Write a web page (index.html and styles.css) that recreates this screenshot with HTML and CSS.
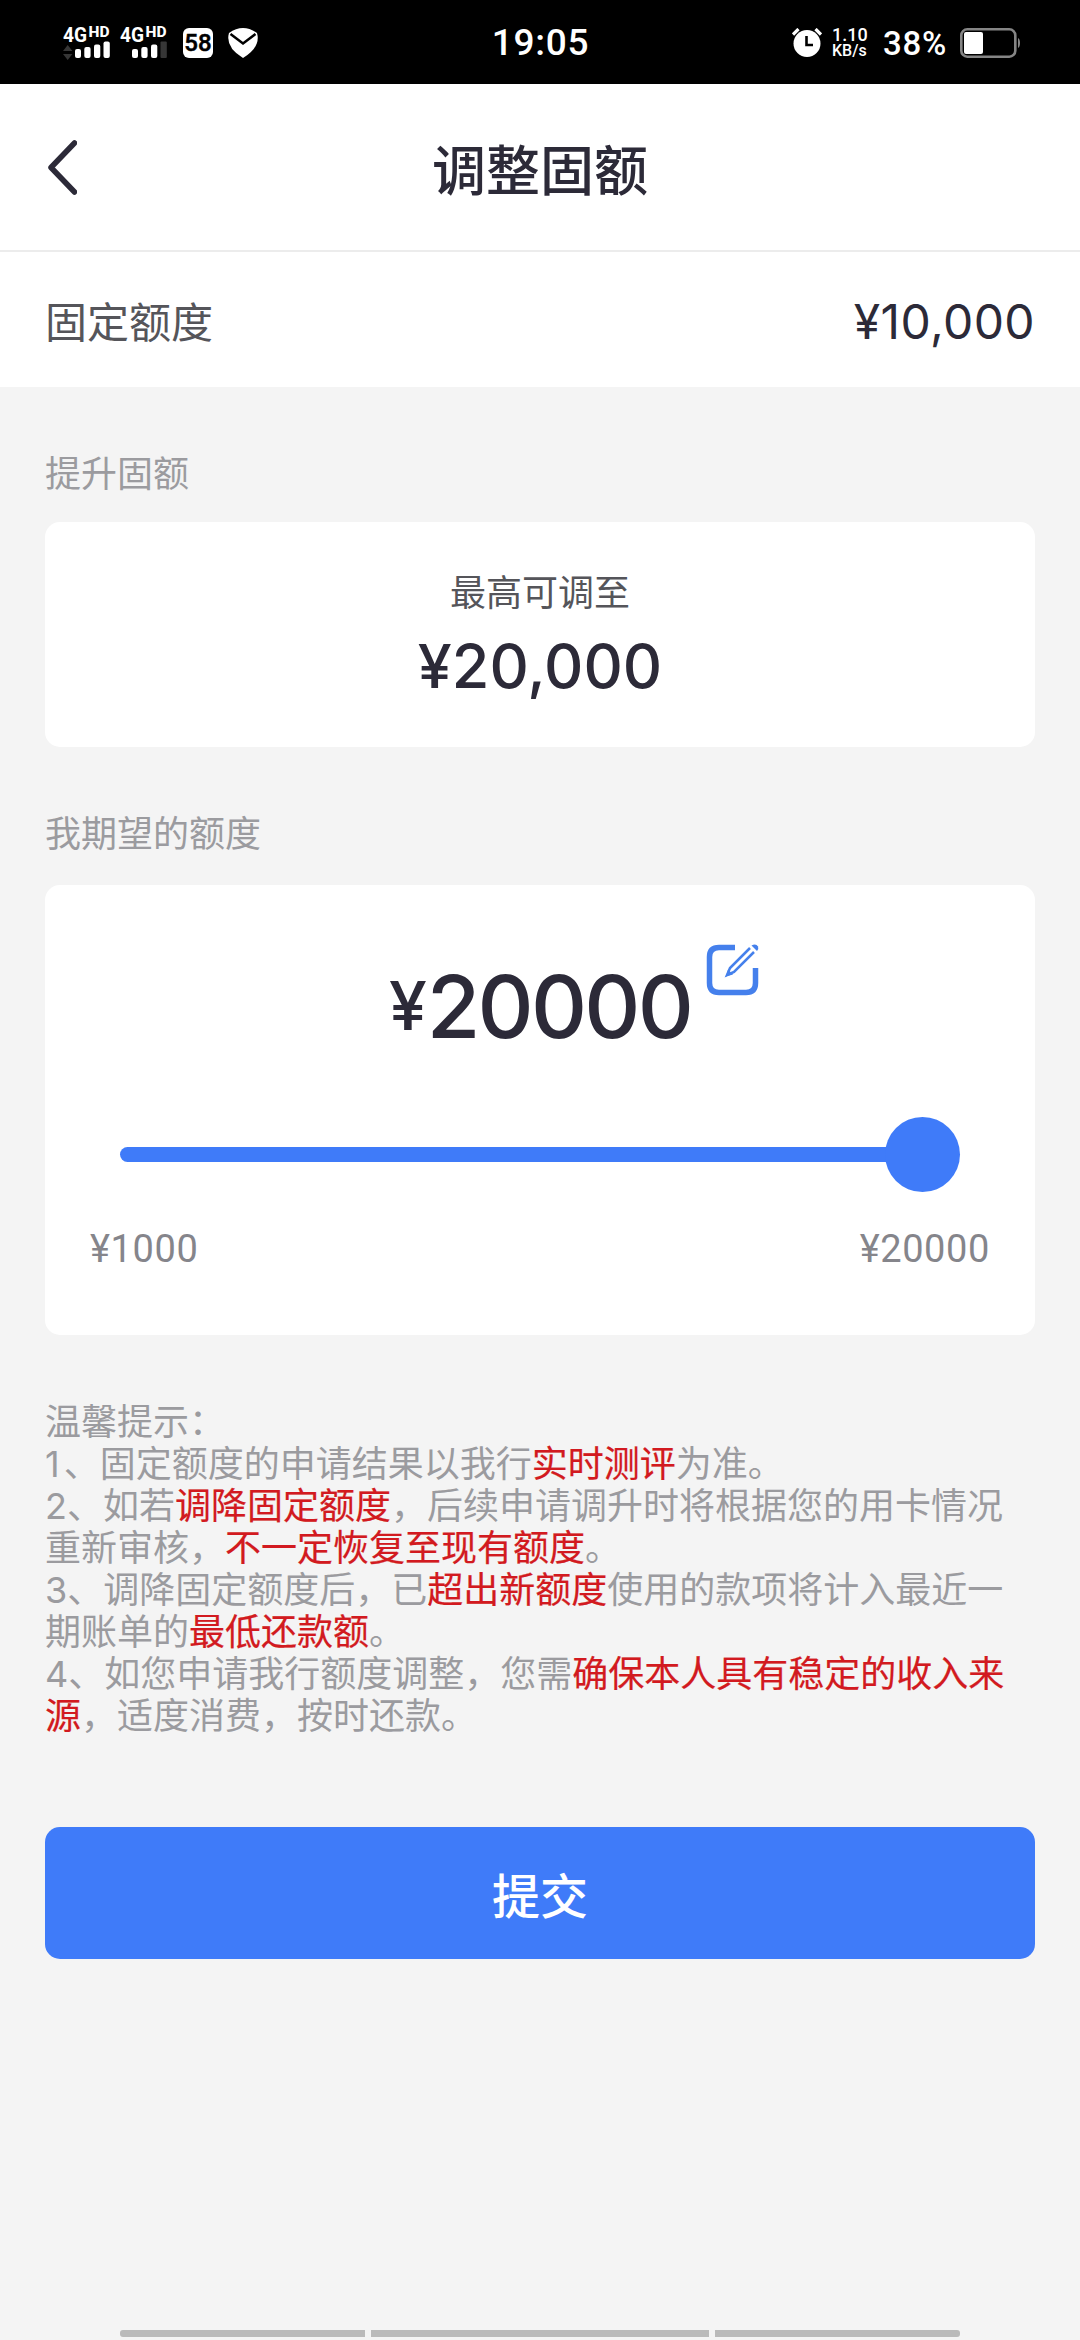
FILE: index.html
```html
<!DOCTYPE html>
<html lang="zh-CN">
<head>
<meta charset="utf-8">
<title>调整固额</title>
<link rel="stylesheet" href="styles.css">
</head>
<body>
<div class="screen">
  <div class="status">
    <div class="status-left">
      <svg class="signal" width="54" height="48" viewBox="-2 -8 54 48">
        <text class="net" x="0" y="16" textLength="24" lengthAdjust="spacingAndGlyphs">4G</text>
        <text class="hd" x="25.5" y="11" textLength="21" lengthAdjust="spacingAndGlyphs">HD</text>
        <path class="dim" d="M0 25l4.7-6 4.7 6zM0 28h9.4l-4.7 6z"/>
        <rect x="12" y="23" width="6" height="9" rx="2"/>
        <rect x="21.3" y="21" width="6.3" height="11" rx="2"/>
        <rect x="31" y="18.5" width="6.3" height="13.5" rx="2"/>
        <rect x="40.5" y="15.5" width="6.3" height="16.5" rx="2"/>
      </svg>
      <svg class="signal" width="54" height="48" viewBox="-2 -8 54 48">
        <text class="net" x="0" y="16" textLength="24" lengthAdjust="spacingAndGlyphs">4G</text>
        <text class="hd" x="25.5" y="11" textLength="21" lengthAdjust="spacingAndGlyphs">HD</text>
        <rect x="12" y="23" width="6" height="9" rx="2"/>
        <rect x="21.3" y="21" width="6.3" height="11" rx="2"/>
        <rect x="31" y="18.5" width="6.3" height="13.5" rx="2"/>
        <rect class="dim" x="40.5" y="15.5" width="6.3" height="16.5" rx="1"/>
      </svg>
      <span class="badge">58</span>
      <svg class="shield" width="30" height="30" viewBox="0 0 30 30">
        <path fill="#fff" d="M1 5Q15-5 29 5Q33 19 15 30Q-3 19 1 5z"/>
        <path fill="none" stroke="#000" stroke-width="2.5" d="M2.5 6L15 15.500L27.500 6"/>
      </svg>
    </div>
    <div class="clock">19:05</div>
    <div class="status-right">
      <svg class="alarm" width="30" height="30" viewBox="0 0 30 30">
        <path fill="none" stroke="#fff" stroke-width="3.200" d="M1 6.500L6.500 1M23.500 1L29 6.500"/>
        <ellipse cx="15" cy="15.500" rx="13.500" ry="13.500" fill="#fff"/>
        <path fill="none" stroke="#000" stroke-width="2.600" d="M14.500 8V17H21"/>
      </svg>
      <div class="rate"><span>1.10</span><span class="unit">KB/s</span></div>
      <div class="percent">38%</div>
      <svg class="battery" width="60" height="30" viewBox="0 0 60 30">
        <rect x="1.300" y="1.300" width="54" height="27.400" rx="6" fill="none" stroke="#858585" stroke-width="2.600"/>
        <rect x="4" y="4" width="19" height="22" rx="2" fill="#fff"/>
        <path d="M58 10q2 1 2 5t-2 5z" fill="#858585"/>
      </svg>
    </div>
  </div>

  <header class="header">
    <svg class="back" width="32" height="56" viewBox="0 0 32 56">
      <path d="M29.500 3L6 27.500L29.500 52" fill="none" stroke="#2c2a38" stroke-width="5.500" stroke-linecap="round" stroke-linejoin="round"/>
    </svg>
    <h1 class="title">调整固额</h1>
  </header>

  <section class="current">
    <span class="current-label">固定额度</span>
    <span class="current-value">¥10,000</span>
  </section>

  <main class="content">
    <h2 class="caption caption-first">提升固额</h2>
    <section class="card max-card">
      <div class="max-label">最高可调至</div>
      <div class="max-value">¥20,000</div>
    </section>

    <h2 class="caption caption-second">我期望的额度</h2>
    <section class="card amount-card">
      <div class="amount">
        <span class="yen">¥</span><span class="number">20000</span>
        <svg class="edit" width="54" height="54" viewBox="0 0 54 54">
          <path d="M29 4.500H13Q3.500 4.500 3.500 14V40Q3.500 49.500 13 49.500H40Q49.500 49.500 49.500 40V25" fill="none" stroke="#4580ec" stroke-width="5.500"/>
          <path d="M44 5L24 25L21 32L28 29L48 9" fill="none" stroke="#4580ec" stroke-width="2.500"/>
          <path d="M20 33.500L22 26.500L27 31.500z" fill="#4580ec"/>
          <path d="M45.500 2.500Q50 0 52 3.500Q53 6 51 8z" fill="#4580ec"/>
        </svg>
      </div>
      <div class="slider"><div class="track"></div><div class="thumb"></div></div>
      <div class="range"><span>¥1000</span><span>¥20000</span></div>
    </section>

    <div class="notes">
      <p>温馨提示：</p>
      <p><span class="first">1</span>、固定额度的申请结果以我行<b>实时测评</b>为准。</p>
      <p>2、如若<b>调降固定额度</b>，后续申请调升时将根据您的用卡情况<br>重新审核，<b>不一定恢复至现有额度</b>。</p>
      <p>3、调降固定额度后，已<b>超出新额度</b>使用的款项将计入最近一<br>期账单的<b>最低还款额</b>。</p>
      <p>4、如您申请我行额度调整，您需<b>确保本人具有稳定的收入来<br>源</b>，适度消费，按时还款。</p>
    </div>

    <button class="submit">提交</button>
  </main>

  <div class="navbar"><i class="side"></i><i class="middle"></i><i class="side"></i></div>
</div>
</body>
</html>
```
FILE: styles.css
```css
* { box-sizing: border-box; margin: 0; padding: 0; }
body {
  font-family: Inter, "Noto Sans CJK SC", sans-serif;
  background: #f4f4f4;
  color: #2c2a38;
}
.screen { width: 1080px; height: 2340px; display: flex; flex-direction: column; overflow: hidden; }

.status {
  height: 84px; background: #000; color: #fff; flex: none; font-family: Roboto, sans-serif;
  display: grid; grid-template-columns: 1fr auto 1fr; align-items: center;
  padding: 0 60px 0 61px;
}
.status-left, .status-right { display: flex; align-items: center; }
.status-right { justify-content: flex-end; }
.signal { fill: #fff; margin-right: 3px; margin-top: -1px; }
.signal .dim { fill: #363636; }
.net { font-size: 20px; font-weight: 700; }
.hd { font-size: 14px; font-weight: 800; }
.badge {
  width: 30px; height: 30px; border-radius: 6px; background: #fff; color: #000;
  margin-left: 8px; font: 500 24px/31px Roboto, sans-serif; text-align: center; -webkit-text-stroke: .5px #000;
}
.shield { margin-left: 15px; }
.clock { font-size: 37px; font-weight: 500; line-height: 84px; letter-spacing: .7px; padding-top: 1px; }
.rate { display: flex; flex-direction: column; width: 35px; margin: 0 16px 0 10px; font-size: 18px; line-height: 15px; font-weight: 500; white-space: nowrap; }
.rate .unit { font-size: 16px; line-height: 17px; }
.percent { font-size: 33px; line-height: 40px; font-weight: 500; letter-spacing: .8px; width: 66px; margin: 3px 11px 0 0; }

.header {
  height: 168px; flex: none; background: #fff; border-bottom: 2px solid #ececec;
  display: grid; grid-template-columns: 1fr auto 1fr; align-items: center; padding: 0 45px;
}
.back { margin-top: 1px; }
.title { font-size: 54px; font-weight: 500; line-height: 80px; padding-top: 9px; }

.current {
  height: 135px; flex: none; background: #fff; padding: 0 45px;
  display: flex; align-items: center; justify-content: space-between;
}
.current-label { font-size: 42px; color: #55555a; }
.current-value { font-size: 48px; padding-top: 4px; letter-spacing: .4px; }

.content { padding: 0 45px; flex: 1; }
.caption { font-size: 36px; font-weight: 400; line-height: 54px; color: #9b9b9f; }
.caption-first { margin: 60px 0 21px; }
.caption-second { margin: 60px 0 24px; }
.card { background: #fff; border-radius: 15px; }
.max-card { height: 225px; text-align: center; padding-top: 44px; }
.max-label { font-size: 36px; line-height: 54px; color: #55555a; }
.max-value { font-size: 61px; line-height: 80px; font-weight: 500; margin-top: 6px; }

.amount-card { height: 450px; padding: 0 45px; }
.amount { height: 232px; padding-top: 57px; display: flex; justify-content: center; align-items: flex-start; }
.yen { font-size: 68px; line-height: 90px; font-weight: 500; margin-top: 18px; }
.number { font-size: 87px; line-height: 110px; font-weight: 500; letter-spacing: -2.8px; margin-top: 10px; }
.edit { margin-left: 15px; margin-right: -69px; margin-top: 1px; }
.slider { height: 75px; padding: 0 30px; display: flex; align-items: center; }
.track { flex: 1; height: 15px; background: #3f7bf9; border-radius: 8px 0 0 8px; margin-right: -10px; }
.thumb { width: 75px; height: 75px; background: #3f7bf9; border-radius: 50%; }
.range { display: flex; justify-content: space-between; margin-top: 33px; font-family: Roboto, sans-serif; font-size: 38px; line-height: 48px; letter-spacing: .6px; color: #85858b; }

.notes { margin-top: 66px; font-size: 36px; line-height: 42px; color: #9b9b9f; white-space: nowrap; }
.first { letter-spacing: 4px; }
.notes b { font-weight: 400; color: #d21a20; -webkit-text-stroke: .2px #d21a20; }

.submit {
  display: block; width: 100%; height: 132px; margin-top: 90px; border: 0; border-radius: 15px;
  background: #3f7bf9; color: #fff; font: 500 48px/130px "Noto Sans CJK SC", sans-serif;
}
.navbar { flex: none; display: flex; gap: 6px; padding: 0 120px; height: 10px; }
.navbar i { height: 7px; background: #bababa; }
.side { width: 245px; }
.side:first-child { border-radius: 3px 0 0 3px; }
.side:last-child { border-radius: 0 3px 3px 0; }
.middle { flex: 1; }
```
